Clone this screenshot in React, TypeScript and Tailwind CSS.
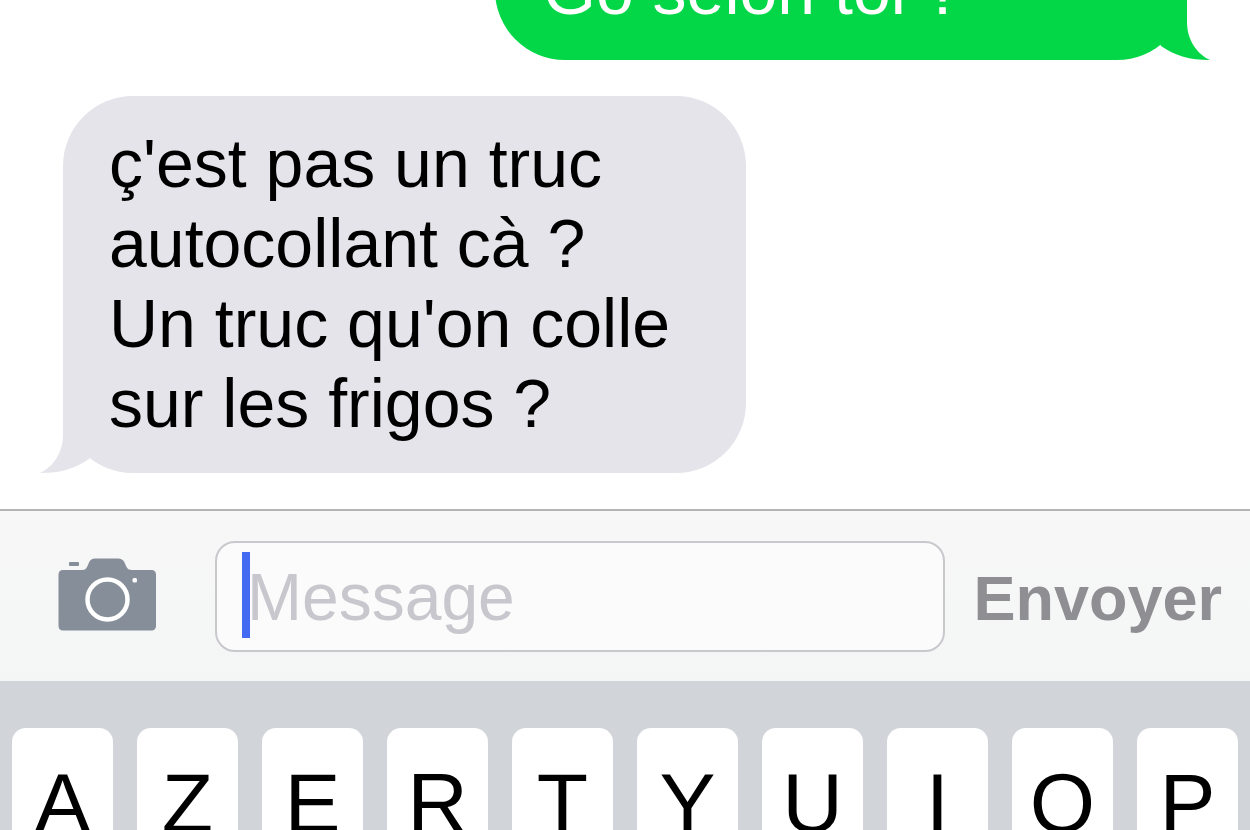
import type { ReactNode } from 'react';

const KEYS = ['A', 'Z', 'E', 'R', 'T', 'Y', 'U', 'I', 'O', 'P'];

function Tail({ className }: { className: string }) {
  return (
    <svg viewBox="0 0 60 100" width="60" height="100" aria-hidden="true" className={`absolute bottom-0 ${className}`}>
      <path d="M37 0 V62 C37 80 47 94 60 100 C39 100 26 96 11 86 L0 60 V0 Z" fill="currentColor" />
    </svg>
  );
}

function Sent({ children }: { children: ReactNode }) {
  return (
    <div className="relative flex min-h-[220px] w-[692px] shrink-0 flex-col justify-end self-end rounded-[70px] bg-[#03d748] px-12 pt-7 pb-[30px] text-white">
      <p>{children}</p>
      <Tail className="-right-[23px] text-[#03d748]" />
    </div>
  );
}

function Received({ children }: { children: ReactNode }) {
  return (
    <div className="relative w-[683px] shrink-0 self-start rounded-[70px] bg-[#e5e4ea] px-[46px] pt-[27px] pb-[30px] text-black">
      <Tail className="-left-[23px] -scale-x-100 text-[#e5e4ea]" />
      <p className="relative whitespace-pre-line">{children}</p>
    </div>
  );
}

function CameraIcon() {
  return (
    <svg viewBox="0 0 98 73" width="98" height="73" aria-hidden="true">
      <rect x="11" y="4" width="10" height="4" rx="1" fill="#868e99" />
      <path
        d="M5 12 H24 C27 12 28 11 29.500 8 L31 4.500 C32.500 1.500 34 .5 37 .5 H60 C63 .5 65 1.500 66.500 4.500 L68 8 C69.500 11 71 12 74 12 H93 C96.500 12 98 13.500 98 17 V67.500 C98 71 96.500 72.500 93 72.500 H5 C2 72.500 .5 71 .5 67.500 V17 C.5 13.500 2 12 5 12 Z"
        fill="#868e99"
      />
      <circle cx="49.500" cy="41.500" r="20" fill="none" stroke="#fff" strokeWidth="4.500" />
      <rect x="74.500" y="20" width="4.500" height="4.500" rx="1.500" fill="#fff" />
    </svg>
  );
}

export default function App() {
  return (
    <main className="flex h-screen flex-col overflow-hidden bg-white font-['Liberation_Sans',Arial,sans-serif]">
      <section
        aria-label="Conversation"
        className="flex min-h-0 flex-1 flex-col justify-end gap-9 overflow-hidden pr-[63px] pb-9 pl-[63px] text-[68px] leading-[80px]"
      >
        <Sent>Go selon toi ?</Sent>
        <Received>{"ç'est pas un truc\nautocollant cà ?\nUn truc qu'on colle\nsur les frigos ?"}</Received>
      </section>

      <form
        onSubmit={(event) => event.preventDefault()}
        className="flex shrink-0 items-center border-t-2 border-[#b4b4b6] bg-linear-to-b from-[#f7f7f7] to-[#f4f6f5] pt-[30px] pr-7 pb-[29px] pl-[58px]"
      >
        <button type="button" aria-label="Appareil photo" className="mr-[59px] shrink-0 pb-1">
          <CameraIcon />
        </button>
        <div className="relative min-w-0 flex-1">
          <input
            type="text"
            aria-label="Message"
            placeholder="Message"
            className="block h-[111px] w-full rounded-[20px] border-2 border-[#c8c8cd] bg-[#fbfbfb] px-[30px] text-[66px] caret-[#4169f2] outline-none placeholder:text-[#c7c7cd] placeholder:opacity-100"
          />
          <span aria-hidden="true" className="absolute top-[11px] left-[27px] h-[86px] w-2 bg-[#426bf2]" />
        </div>
        <button type="submit" className="ml-7 shrink-0 pt-0.5 text-[63px] leading-[80px] font-bold text-[#8e8e93]">
          Envoyer
        </button>
      </form>

      <section aria-label="Clavier" className="h-[149px] shrink-0 overflow-hidden bg-[#d1d5da] px-3 pt-[47px]">
        <div className="grid grid-cols-10 gap-6">
          {KEYS.map((key) => (
            <button
              key={key}
              type="button"
              className="flex h-[150px] items-center justify-center rounded-[14px] bg-white text-[84px] leading-none text-black"
            >
              {key}
            </button>
          ))}
        </div>
      </section>
    </main>
  );
}
